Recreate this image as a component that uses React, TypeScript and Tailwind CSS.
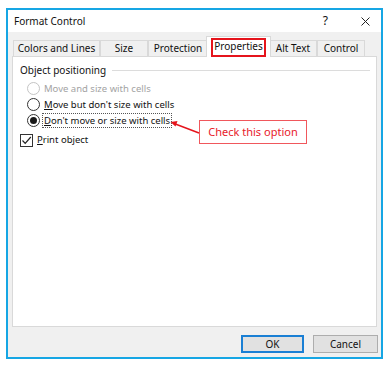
const font = { fontFamily: '"Noto Sans", "Open Sans", sans-serif' }

function Tab({ label, w, selected }: { label: string; w: string; selected?: boolean }) {
  if (selected) {
    return (
      <div className={`relative z-10 -mx-[2px] flex h-[21px] ${w} items-start justify-center whitespace-nowrap border border-b-0 border-[#d9d9d9] bg-white pt-[2px]`}>
        <span>{label}</span>
        <div className="absolute left-[4px] right-[4px] top-[1px] bottom-[0px] border-2 border-[#e5141c]" />
      </div>
    )
  }
  return (
    <div className={`flex h-[17px] ${w} items-center justify-center whitespace-nowrap border border-b-0 border-[#d9d9d9] bg-[#f0f0f0] pb-[1px]`}>
      {label}
    </div>
  )
}

function Radio({ label, checked, disabled, focus }: { label: React.ReactNode; checked?: boolean; disabled?: boolean; focus?: boolean }) {
  return (
    <div className="flex h-[16px] items-center">
      <div className={`flex h-[13px] w-[13px] items-center justify-center rounded-full border ${disabled ? 'border-[#c4c4c4]' : 'border-[#333]'} bg-white`}>
        {checked && <div className="h-[7px] w-[7px] rounded-full bg-[#1a1a1a]" />}
      </div>
      <span className={`ml-[2px] px-[1px] text-[9.5px] leading-[13px] ${focus ? 'border border-dotted border-[#555]' : 'border border-transparent'} ${disabled ? 'text-[#a3a3a3]' : 'text-[#111]'}`}>
        {label}
      </span>
    </div>
  )
}

export default function App() {
  return (
    <div className="h-[367px] w-[389px] bg-white pl-[6px] pt-[8px] text-[10px] text-[#111]" style={font}>
      <div className="flex h-[351px] w-[377px] flex-col border-2 border-[#16a6e4] bg-[#f0f0f0]">
        <div className="flex h-[22px] shrink-0 items-center bg-white pl-[6px] pr-[11px] text-[10px]">
          <span className="flex-1">Format Control</span>
          <span className="mr-[33px] text-[12px]">?</span>
          <svg width="9" height="9" viewBox="0 0 9 9" className="mt-[1px]">
            <path d="M0.5 0.5 L8.5 8.5 M8.5 0.5 L0.5 8.5" stroke="#222" strokeWidth="1" />
          </svg>
        </div>

        <div className="mx-[4px] mt-[5px] flex h-[20px] items-end pl-[1px]">
          <Tab label="Colors and Lines" w="w-[87px]" />
          <Tab label="Size" w="w-[48px]" />
          <Tab label="Protection" w="w-[60px]" />
          <Tab label="Properties" w="w-[65px]" selected />
          <Tab label="Alt Text" w="w-[48px]" />
          <Tab label="Control" w="w-[48px]" />
        </div>

        <div className="relative mx-[4px] -mt-px h-[271px] border border-[#d9d9d9] bg-white">
          <div className="flex items-center pl-[7px] pr-[6px] pt-[6px]">
            <span>Object positioning</span>
            <div className="ml-[6px] h-px flex-1 bg-[#dcdcdc]" />
          </div>
          <div className="ml-[14px] mt-[2px] flex flex-col">
            <Radio label="Move and size with cells" disabled />
            <Radio label={<><span className="underline">M</span>ove but don't size with cells</>} />
            <Radio label={<><span className="underline">D</span>on't move or size with cells</>} checked focus />
          </div>
          <div className="ml-[7px] mt-[5px] flex items-center">
            <div className="flex h-[13px] w-[13px] items-center justify-center border border-[#333] bg-white">
              <svg width="11" height="11" viewBox="0 0 11 11">
                <path d="M1.5 5.5 L4.2 8.3 L9.8 2" stroke="#222" strokeWidth="1.2" fill="none" />
              </svg>
            </div>
            <span className="ml-[4px] text-[9.5px]"><span className="underline">P</span>rint object</span>
          </div>

          <svg className="absolute left-[157px] top-[62px]" width="42" height="18" viewBox="0 0 42 18">
            <path d="M29 14 L4 4.5" stroke="#e5141c" strokeWidth="1.4" />
            <path d="M0.5 3 L7.5 2 L5.5 7.5 Z" fill="#e5141c" />
          </svg>
          <div className="absolute left-[186px] top-[63px] flex h-[24px] w-[108px] items-center justify-center border border-[#f0575c] bg-white text-[11px] text-[#e8202a]">
            Check this option
          </div>
        </div>

        <div className="mt-[8px] flex justify-end gap-[9px] pr-[3px]">
          <button className="h-[18px] w-[63px] border-2 border-[#1a7fd4] bg-[#e1e1e1] text-[10px] leading-none">OK</button>
          <button className="h-[18px] w-[65px] border border-[#adadad] bg-[#e1e1e1] text-[10px] leading-none">Cancel</button>
        </div>
      </div>
    </div>
  )
}
